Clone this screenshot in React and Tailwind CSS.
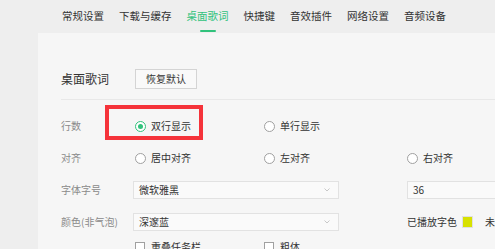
import React from "react";

const font = { fontFamily: '"Noto Sans CJK SC", "Noto Sans", sans-serif' };

function Radio({ checked, label }) {
  return (
    <div className="flex items-center gap-[5px] whitespace-nowrap">
      <span
        className={
          "flex h-[11px] w-[11px] shrink-0 items-center justify-center rounded-full border bg-white " +
          (checked ? "border-[#31c27c]" : "border-[#a0a0a0]")
        }
      >
        {checked && <span className="h-[5px] w-[5px] rounded-full bg-[#31c27c]" />}
      </span>
      <span className="text-[10px] leading-none text-[#333]">{label}</span>
    </div>
  );
}

function Check({ label }) {
  return (
    <div className="flex items-center gap-[6px] whitespace-nowrap">
      <span className="h-[10px] w-[10px] shrink-0 border border-[#a0a0a0] bg-white" />
      <span className="text-[10px] leading-none text-[#333]">{label}</span>
    </div>
  );
}

function Select({ value }) {
  return (
    <div className="flex h-[18px] w-[206px] items-center justify-between border border-[#e2e2e2] bg-[#fafafa] pl-[5px] pr-[8px]">
      <span className="text-[10px] leading-none text-[#333]">{value}</span>
      <svg width="6" height="4" viewBox="0 0 6 4">
        <path d="M0.5 0.5 L3 3 L5.5 0.5" fill="none" stroke="#c8c8c8" strokeWidth="1" />
      </svg>
    </div>
  );
}

function Row({ label, children, h = "h-[32px]" }) {
  return (
    <div className={"flex shrink-0 items-center " + h}>
      <div className="w-[72px] shrink-0 whitespace-nowrap text-[10px] leading-none text-[#8a8a8a]">{label}</div>
      <div className="flex flex-1 items-center">{children}</div>
    </div>
  );
}

export default function App() {
  const tabs = ["常规设置", "下载与缓存", "桌面歌词", "快捷键", "音效插件", "网络设置", "音频设备"];
  return (
    <div className="flex h-[249px] w-[495px] flex-col overflow-hidden bg-[#eeeeee]" style={font}>
      <div className="flex h-[33px] shrink-0 items-center gap-[15px] pl-[62px]">
        {tabs.map((t) => (
          <div key={t} className="relative flex h-full items-center">
            <span
              className={
                "whitespace-nowrap text-[10.5px] leading-none " +
                (t === "桌面歌词" ? "text-[#31c27c]" : "text-[#333]")
              }
            >
              {t}
            </span>
            {t === "桌面歌词" && (
              <span className="absolute bottom-[1px] left-1/2 h-[2px] w-[16px] -translate-x-1/2 rounded-full bg-[#31c27c]" />
            )}
          </div>
        ))}
      </div>
      <div className="flex min-h-0 flex-1">
        <div className="w-[38px] shrink-0" />
        <div className="relative flex-1 overflow-hidden bg-[#f6f6f6] pl-[23px] pt-[36px]">
          <div className="flex h-[20px] items-center">
            <span className="w-[74px] text-[12px] leading-none text-[#333]">桌面歌词</span>
            <div className="flex h-[20px] w-[62px] items-center justify-center border border-[#d4d4d4] bg-[#f9f9f9] text-[10px] leading-none text-[#333]">
              恢复默认
            </div>
          </div>
          <div className="mt-[10px] h-px bg-[#e8e8e8]" />
          <div className="mt-[10px] flex flex-col">
            <Row label="行数">
              <div className="w-[131px] shrink-0 pl-[2px]"><Radio checked label="双行显示" /></div>
              <Radio label="单行显示" />
            </Row>
            <Row label="对齐">
              <div className="w-[131px] shrink-0 pl-[2px]"><Radio label="居中对齐" /></div>
              <div className="w-[143px] shrink-0"><Radio label="左对齐" /></div>
              <Radio label="右对齐" />
            </Row>
            <Row label="字体字号">
              <div className="w-[274px] shrink-0"><Select value="微软雅黑" /></div>
              <div className="flex h-[18px] flex-1 items-center border border-r-0 border-[#e2e2e2] bg-[#fafafa] pl-[5px] text-[10px] leading-none text-[#333]">
                36
              </div>
            </Row>
            <Row label="颜色(非气泡)">
              <div className="w-[274px] shrink-0"><Select value="深邃蓝" /></div>
              <span className="shrink-0 whitespace-nowrap text-[10px] leading-none text-[#333]">已播放字色</span>
              <span className="ml-[5px] h-[12px] w-[11px] shrink-0 border border-[#e0e0e0] bg-[#d7e100]" />
              <span className="ml-[12px] shrink-0 whitespace-nowrap text-[10px] leading-none text-[#333]">未播放字色</span>
            </Row>
            <Row label="" h="h-[18px]">
              <div className="w-[131px] shrink-0 pl-[2px]"><Check label="重叠任务栏" /></div>
              <Check label="粗体" />
            </Row>
          </div>
          <div className="pointer-events-none absolute left-[67px] top-[72px] h-[35px] w-[98px] border-[4px] border-[#f5333a]" />
        </div>
      </div>
    </div>
  );
}
